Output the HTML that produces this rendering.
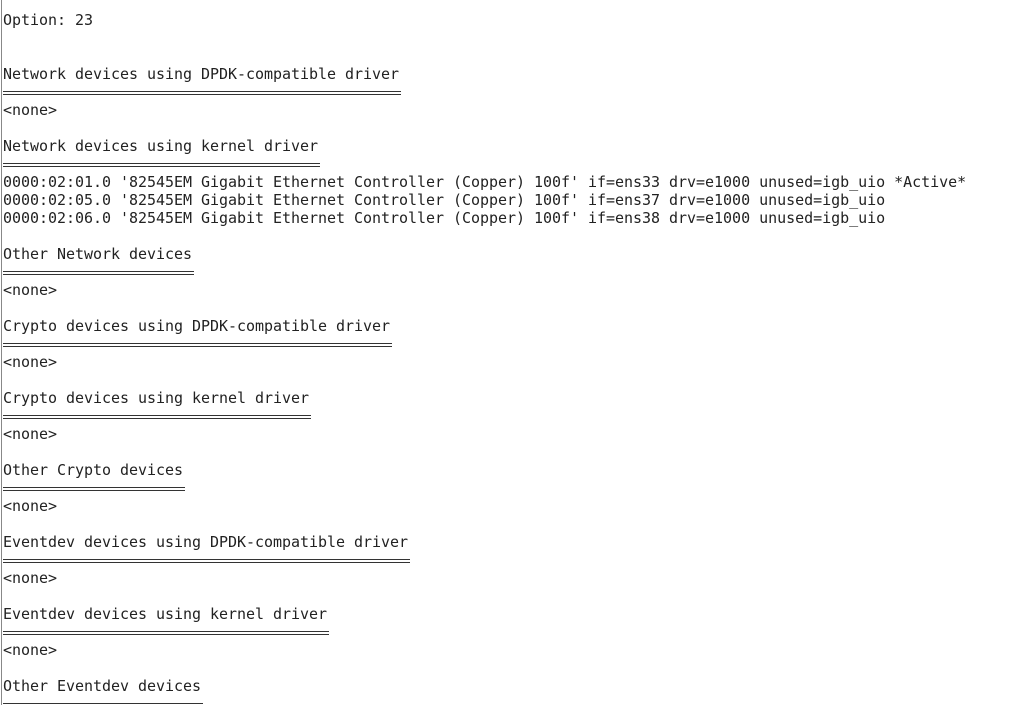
<!DOCTYPE html>
<html><head><meta charset="utf-8"><style>
html,body{margin:0;padding:0;background:#fff;width:1009px;height:705px;overflow:hidden;position:relative}
.l{position:absolute;left:3px;height:18px;line-height:18px;font-family:"DejaVu Sans Mono","Liberation Mono",monospace;font-size:15px;color:#222;white-space:pre;letter-spacing:-0.03px}
.r{position:absolute;left:3px;height:2px;border-top:1px solid #333;border-bottom:1px solid #333}
.bar{position:absolute;left:1px;top:0;width:1px;height:705px;background:#888}
</style></head><body>
<div class="bar"></div>
<script>
var rows=[[0,"Option: 23"],[3,"Network devices using DPDK-compatible driver",1],[5,"<none>"],
[7,"Network devices using kernel driver",1],
[9,"0000:02:01.0 '82545EM Gigabit Ethernet Controller (Copper) 100f' if=ens33 drv=e1000 unused=igb_uio *Active*"],
[10,"0000:02:05.0 '82545EM Gigabit Ethernet Controller (Copper) 100f' if=ens37 drv=e1000 unused=igb_uio"],
[11,"0000:02:06.0 '82545EM Gigabit Ethernet Controller (Copper) 100f' if=ens38 drv=e1000 unused=igb_uio"],
[13,"Other Network devices",1],[15,"<none>"],
[17,"Crypto devices using DPDK-compatible driver",1],[19,"<none>"],
[21,"Crypto devices using kernel driver",1],[23,"<none>"],
[25,"Other Crypto devices",1],[27,"<none>"],
[29,"Eventdev devices using DPDK-compatible driver",1],[31,"<none>"],
[33,"Eventdev devices using kernel driver",1],[35,"<none>"],
[37,"Other Eventdev devices",1]];
var h="";
rows.forEach(function(r){
var t=11+18*r[0];
h+='<div class="l" style="top:'+t+'px">'+r[1].replace(/&/g,"&amp;").replace(/</g,"&lt;").replace(/>/g,"&gt;")+'</div>';
if(r[2]){h+='<div class="r" style="top:'+(t+26)+'px;width:'+(r[1].length*9+2)+'px"></div>';}
});
document.write(h);
</script>
</body></html>
